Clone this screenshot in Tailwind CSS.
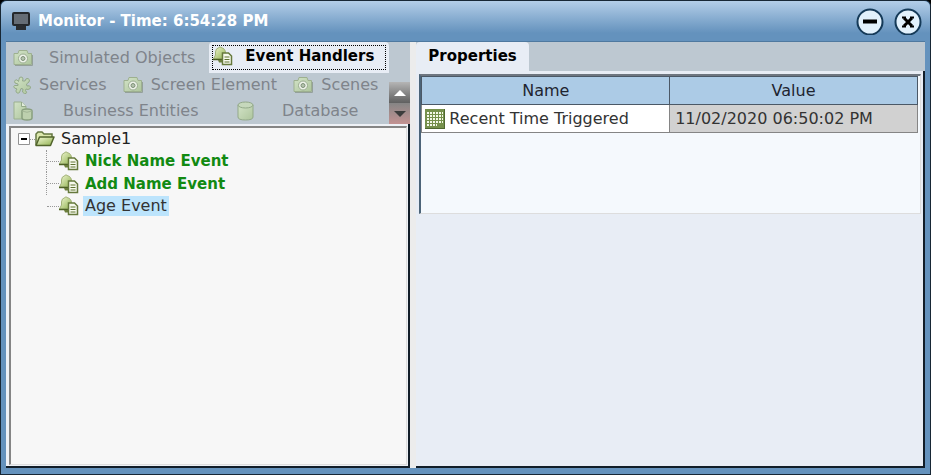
<!doctype html>
<html lang="en">
  <head>
    <meta charset="utf-8" />
    <meta name="viewport" content="width=device-width, initial-scale=1" />
    <title>Monitor</title>

    <!-- Tailwind CSS -->
    <script src="https://cdn.jsdelivr.net/npm/@tailwindcss/browser@4"></script>
  </head>

  <body class="h-screen bg-black font-['DejaVu_Sans',sans-serif] text-base leading-5 text-[#333]">
    <!-- Shared icons -->
    <svg class="absolute h-0 w-0" aria-hidden="true">
      <defs>
        <linearGradient id="green" x1="0" y1="0" x2="1" y2="1">
          <stop offset="0" stop-color="#f4fad8" />
          <stop offset="1" stop-color="#8fb04e" />
        </linearGradient>
        <linearGradient id="pale" x1="0" y1="0" x2="1" y2="1">
          <stop offset="0" stop-color="#d3e3c8" />
          <stop offset="1" stop-color="#adc59c" />
        </linearGradient>
      </defs>
      <symbol id="camera" viewBox="0 0 20 16">
        <path d="M2 15.500h17.500V5" fill="none" stroke="#94a09a" />
        <path d="M1 3.500h4l1-3h8l1 3h3.500v11H1z" fill="url(#pale)" stroke="#9db08f" stroke-linejoin="round" />
        <circle cx="10" cy="8.500" r="4.500" fill="#edf2e9" stroke="#9aac90" />
        <circle cx="10" cy="8.500" r="2" fill="#b5c4ae" stroke="#7d8f77" />
      </symbol>
      <symbol id="puzzle" viewBox="0 0 18 18">
        <path d="M6 3.500Q6 1 8 1t2 2l-.5 2 2.500 0q.5-3 3-2.500 2.500 1 1 3.500L13.500 8l.5 2q3-1 3.500 1t-2.500 2.500l-2-.5-.5 1.500q2 2 .5 3T9.500 16L10 13l-2-.5-1.500 4q-1.500 1.500-3 0t.5-3.500L1.500 12Q0 10.500 1.500 9.500L5 9.500 5 8 2 7Q1 5 2.500 4t3 1.500z" fill="url(#pale)" stroke="#93a989" stroke-linejoin="round" />
      </symbol>
      <symbol id="entity" viewBox="0 0 20 20">
        <path d="M1 1h7.500L13 5.500V18H1z" fill="url(#pale)" stroke="#9bb08f" />
        <path d="M8.500 1v4.500H13" fill="#e2ecdc" stroke="#93a989" />
        <path d="M9 10q0-2 5-2t5 2v7q0 2-5 2t-5-2z" fill="#bdd0ae" stroke="#889e7e" stroke-width="1.500" />
        <path d="M9 10q5 2.500 10 0" fill="none" stroke="#a3b696" />
      </symbol>
      <symbol id="database" viewBox="0 0 17 20">
        <path d="M1 4v12q0 3 7.500 3t7.500-3V4" fill="url(#pale)" stroke="#93a989" />
        <ellipse cx="8.500" cy="4" rx="7.500" ry="3" fill="#c6d8bc" stroke="#93a989" />
      </symbol>
      <symbol id="event" viewBox="0 0 20 20">
        <path d="M6 1.500q1-1.500 2 0 4.500 1 4.500 5.500v6H0.500l2-4V6q0-3.500 3.500-4.500z" fill="url(#green)" stroke="#a3b279" />
        <path d="M0 13.500h10" stroke="#4d6124" stroke-width="1.500" />
        <path d="M5 14h4v2.500H6z" fill="#6c7f3c" />
        <path d="M9.500 7h6l3 3v8.500h-9z" fill="#f7faed" stroke="#66793c" stroke-width="1.500" />
        <path d="M11.500 11h5M11.500 13.500h5M11.500 16h5" stroke="#5f7331" />
      </symbol>
      <symbol id="folder" viewBox="0 0 20 16">
        <path d="M1 14V3l2-2h4l2 2h8v3" fill="#dce8ae" stroke="#647741" stroke-width="1.500" />
        <path d="M1 14.500L4.500 6H19l-3.500 8.500z" fill="url(#green)" stroke="#51642c" stroke-width="1.500" stroke-linejoin="round" />
      </symbol>
      <symbol id="grid" viewBox="0 0 20 20">
        <path d="M0 0h20v20H0z" fill="#4f6830" />
        <path d="M0 0h19v19H0z" fill="#75904c" />
        <path d="M2 4h16M2 7h16M2 10h16M2 13h16M2 16h10" stroke="#f4f8e8" stroke-width="2" stroke-dasharray="2 1" />
      </symbol>
    </svg>

    <main class="flex h-full flex-col rounded-t-md border border-[#172735] bg-[#6492bd] px-[5px] pb-[6px]">
      <!-- Title bar -->
      <header class="-mx-[5px] flex h-10 shrink-0 items-center rounded-t-md bg-linear-to-b from-[#b3cee8] to-[#6492bd] to-80% pr-2 pl-[11px]">
        <svg class="mr-2 h-[18px] w-[18px]" viewBox="0 0 18 18">
          <rect x="1" y="1" width="16" height="12" rx="1" fill="#656d76" stroke="#24282c" stroke-width="2" />
          <path d="M7 13h4v1h3v4H4v-4h3z" fill="#292d31" />
        </svg>
        <h1 class="flex-1 text-[15px] font-bold text-white">Monitor - Time: 6:54:28 PM</h1>
        <div class="flex gap-[10px]">
          <button type="button" aria-label="Minimize" class="h-7 w-7">
            <svg viewBox="0 0 28 28">
              <circle cx="14" cy="15" r="12.500" fill="#e2f1fc" stroke="#153a58" stroke-width="2" />
              <path d="M7 14.500h14" stroke="#000" stroke-width="4" />
            </svg>
          </button>
          <button type="button" aria-label="Close" class="h-7 w-7">
            <svg viewBox="0 0 28 28">
              <circle cx="14" cy="15" r="12.500" fill="#e2f1fc" stroke="#153a58" stroke-width="2" />
              <path d="M10 11l8 8M18 11l-8 8" stroke="#000" stroke-width="3" />
              <path d="M8 10.500h4M16 10.500h4M8 19.500h4M16 19.500h4" stroke="#000" stroke-width="2" />
            </svg>
          </button>
        </div>
      </header>

      <div class="flex min-h-0 flex-1 border-t border-[#4f799f]">
        <!-- Objects -->
        <section class="flex w-[44%] shrink-0 flex-col bg-[#eef1f6]">
          <div class="flex h-[82px] bg-[#bdc8d1] text-[#7f848b]">
            <div role="tablist" class="flex min-w-0 flex-1 flex-col">
              <div class="flex h-[31px] items-center">
                <button type="button" role="tab" class="flex flex-1 items-center gap-4 pl-[7px] whitespace-nowrap">
                  <svg class="h-4 w-5"><use href="#camera" /></svg>Simulated Objects
                </button>
                <button type="button" role="tab" aria-selected="true" class="flex h-full w-[180px] items-center rounded-t-sm bg-[#e8edf5] p-[3px] font-bold text-black">
                  <span class="flex h-full w-full items-start gap-3 border border-dotted border-black text-[15px] whitespace-nowrap">
                    <svg class="h-5 w-5"><use href="#event" /></svg>Event Handlers
                  </span>
                </button>
              </div>
              <div class="flex h-[24px] items-center justify-between pr-[11px] pl-[7px] whitespace-nowrap">
                <button type="button" role="tab" class="flex items-center gap-2">
                  <svg class="h-[18px] w-[18px]"><use href="#puzzle" /></svg>Services
                </button>
                <button type="button" role="tab" class="flex items-center gap-2">
                  <svg class="h-4 w-5"><use href="#camera" /></svg>Screen Element
                </button>
                <button type="button" role="tab" class="flex items-center gap-2">
                  <svg class="h-4 w-5"><use href="#camera" /></svg>Scenes
                </button>
              </div>
              <div class="flex h-[27px] items-center pl-[7px] whitespace-nowrap">
                <button type="button" role="tab" class="flex w-[224px] items-center gap-[30px]">
                  <svg class="h-5 w-5"><use href="#entity" /></svg>Business Entities
                </button>
                <button type="button" role="tab" class="flex items-center gap-7">
                  <svg class="h-5 w-[17px]"><use href="#database" /></svg>Database
                </button>
              </div>
            </div>
            <div class="flex w-[21px] flex-col justify-end">
              <button type="button" aria-label="Scroll up" class="grid h-[21px] place-items-center bg-linear-to-b from-[#b5b5b5] to-[#606060]">
                <svg class="h-[6px] w-3" viewBox="0 0 12 6"><path d="M0 6l6-6 6 6z" fill="#fff" /></svg>
              </button>
              <button type="button" aria-label="Scroll down" class="grid h-[21px] place-items-center bg-linear-to-b from-[#858585] to-[#c39292]">
                <svg class="h-[6px] w-3" viewBox="0 0 12 6"><path d="M0 0l6 6 6-6z" fill="#3c3c3c" /></svg>
              </button>
            </div>
          </div>

          <div class="flex flex-1 border-r-2 border-b-2 border-[#111d28] pt-[2px] pr-px pb-px pl-[3px]">
            <ul role="tree" class="flex-1 border-t-2 border-r border-b border-l-2 border-t-[#858585] border-r-[#ddd] border-b-[#ddd] border-l-[#858585] bg-[#f7f7f7] pl-[7px]">
              <li role="treeitem" aria-expanded="true">
                <div class="flex h-[22px] items-center text-[#222]">
                  <button type="button" aria-label="Collapse" class="h-3 w-3">
                    <svg viewBox="0 0 12 12"><path d="M.5.500h11v11H.5z" fill="#fff" stroke="#929292" /><path d="M3 6h6" stroke="#000" stroke-width="2" /></svg>
                  </button>
                  <span class="w-[5px] border-t border-dotted border-[#999]"></span>
                  <svg class="mr-[6px] h-4 w-5"><use href="#folder" /></svg>Sample1
                </div>
                <ul role="group" class="pl-[28px]">
                  <li role="treeitem" class="flex h-[22px] items-center border-l border-dotted border-[#999] font-bold text-[#128a12]">
                    <span class="w-3 border-t border-dotted border-[#999]"></span>
                    <svg class="mr-[5px] h-5 w-5"><use href="#event" /></svg><span class="px-px text-[15px]">Nick Name Event</span>
                  </li>
                  <li role="treeitem" class="flex h-[23px] items-center border-l border-dotted border-[#999] font-bold text-[#128a12]">
                    <span class="w-3 border-t border-dotted border-[#999]"></span>
                    <svg class="mr-[5px] h-5 w-5"><use href="#event" /></svg><span class="px-px text-[15px]">Add Name Event</span>
                  </li>
                  <li role="treeitem" aria-selected="true" class="flex h-[22px] items-center">
                    <span class="ml-px w-3 border-t border-dotted border-[#999]"></span>
                    <svg class="mr-1 h-5 w-5"><use href="#event" /></svg><span class="bg-[#bce4fc] px-[2px]">Age Event</span>
                  </li>
                </ul>
              </li>
            </ul>
          </div>
        </section>

        <div class="w-[6px] shrink-0 bg-[#ececec]"></div>

        <!-- Properties -->
        <section class="flex min-w-0 flex-1 flex-col border-b-2 border-[#111d28] bg-[#e8edf5]">
          <div role="tablist" class="flex h-[29px] bg-[#bdc8d1]">
            <button type="button" role="tab" aria-selected="true" class="rounded-t-sm bg-[#e8edf5] px-3 pb-[2px] text-[15px] font-bold text-black">Properties</button>
          </div>
          <div class="flex-1 border-r-2 border-[#111d28] pt-[3px] pr-[2px] pl-[3px]">
            <div class="h-[140px] border-t-2 border-r border-b border-l-2 border-t-[#6e7680] border-r-[#ddd] border-b-[#ddd] border-l-[#4c6478] bg-[#f5f9fd] pr-[2px]">
              <table class="w-full table-fixed border-collapse">
                <thead>
                  <tr class="h-7 bg-[#accbe6] text-[#1e2430]">
                    <th class="border border-[#4b5866] font-normal">Name</th>
                    <th class="border border-[#4b5866] font-normal">Value</th>
                  </tr>
                </thead>
                <tbody>
                  <tr class="h-7 bg-white">
                    <td class="border border-[#858585] pl-[3px]">
                      <div class="flex items-center gap-1 whitespace-nowrap"><svg class="h-5 w-5"><use href="#grid" /></svg>Recent Time Triggered</div>
                    </td>
                    <td class="border border-[#858585] bg-[#d1d1d1] pl-[5px] whitespace-nowrap">11/02/2020 06:50:02 PM</td>
                  </tr>
                </tbody>
              </table>
            </div>
          </div>
        </section>
      </div>
    </main>
  </body>
</html>
